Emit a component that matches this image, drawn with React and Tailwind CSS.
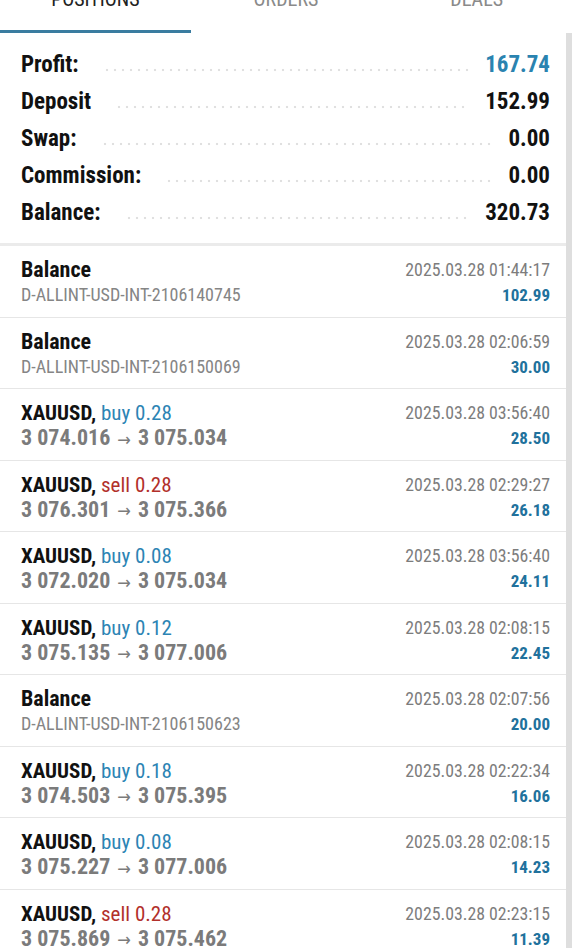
const SUMMARY = [
  { label: 'Profit:', value: '167.74', blue: true },
  { label: 'Deposit', value: '152.99' },
  { label: 'Swap:', value: '0.00' },
  { label: 'Commission:', value: '0.00' },
  { label: 'Balance:', value: '320.73' },
];

const DEALS = [
  { kind: 'balance', sub: 'D-ALLINT-USD-INT-2106140745', date: '2025.03.28 01:44:17', amount: '102.99' },
  { kind: 'balance', sub: 'D-ALLINT-USD-INT-2106150069', date: '2025.03.28 02:06:59', amount: '30.00' },
  { kind: 'trade', side: 'buy', vol: '0.28', from: '3 074.016', to: '3 075.034', date: '2025.03.28 03:56:40', amount: '28.50' },
  { kind: 'trade', side: 'sell', vol: '0.28', from: '3 076.301', to: '3 075.366', date: '2025.03.28 02:29:27', amount: '26.18' },
  { kind: 'trade', side: 'buy', vol: '0.08', from: '3 072.020', to: '3 075.034', date: '2025.03.28 03:56:40', amount: '24.11' },
  { kind: 'trade', side: 'buy', vol: '0.12', from: '3 075.135', to: '3 077.006', date: '2025.03.28 02:08:15', amount: '22.45' },
  { kind: 'balance', sub: 'D-ALLINT-USD-INT-2106150623', date: '2025.03.28 02:07:56', amount: '20.00' },
  { kind: 'trade', side: 'buy', vol: '0.18', from: '3 074.503', to: '3 075.395', date: '2025.03.28 02:22:34', amount: '16.06' },
  { kind: 'trade', side: 'buy', vol: '0.08', from: '3 075.227', to: '3 077.006', date: '2025.03.28 02:08:15', amount: '14.23' },
  { kind: 'trade', side: 'sell', vol: '0.28', from: '3 075.869', to: '3 075.462', date: '2025.03.28 02:23:15', amount: '11.39' },
];

function DealRow({ deal }) {
  return (
    <div className="h-[71.5px] shrink-0 flex justify-between border-b border-[#e6e6e6] pl-[21px] pr-[16px] pt-[12px]">
      <div className="flex flex-col">
        {deal.kind === 'balance' ? (
          <>
            <div className="h-[24px] leading-[24px] text-[22px] font-bold text-[#111]">Balance</div>
            <div className="h-[26px] leading-[26px] text-[18px] text-[#858585]">{deal.sub}</div>
          </>
        ) : (
          <>
            <div className="h-[24px] leading-[24px] text-[21px]">
              <span className="font-bold text-[#111]">XAUUSD,</span>{' '}
              <span className={deal.side === 'buy' ? 'text-[#2c84b4]' : 'text-[#b2302b]'}>
                {deal.side} {deal.vol}
              </span>
            </div>
            <div className="h-[26px] leading-[26px] text-[22px] font-bold text-[#7b7b7b] flex items-center">
              <span>{deal.from}</span>
              <span className="mx-[7px] mt-[3px] text-[18px] font-normal">→</span>
              <span>{deal.to}</span>
            </div>
          </>
        )}
      </div>
      <div className="flex flex-col items-end">
        <div className="h-[24px] leading-[24px] text-[17.8px] text-[#7d7d7d]">{deal.date}</div>
        <div className="h-[26px] leading-[26px] text-[17px] font-bold text-[#21719c]">{deal.amount}</div>
      </div>
    </div>
  );
}

export default function App() {
  return (
    <div className="w-[572px] h-[948px] overflow-hidden bg-white flex flex-col font-['Roboto_Condensed','Liberation_Sans_Narrow','DejaVu_Sans_Condensed',Roboto,sans-serif]">
      {/* tabs, scrolled mostly off the top */}
      <div className="h-[33px] shrink-0 grid grid-cols-3 overflow-hidden">
        {['POSITIONS', 'ORDERS', 'DEALS'].map((t, i) => (
          <div key={t} className="flex flex-col items-center justify-between">
            <div className={`-mt-[11px] text-[20px] leading-[20px] ${i === 0 ? 'text-[#222]' : 'text-[#8a8a8a]'}`}>{t}</div>
            <div className={`h-[3px] w-full ${i === 0 ? 'bg-[#3a7ca0]' : ''}`} />
          </div>
        ))}
      </div>

      <div className="flex-1 flex min-h-0">
        <div className="flex-1 flex flex-col min-w-0">
          {/* account summary */}
          <div className="pt-[14px] pb-[11px] pl-[21px] pr-[16px] flex flex-col border-b-[3px] border-[#ebebeb]">
            {SUMMARY.map(r => (
              <div key={r.label} className="h-[37px] flex items-center text-[23px] font-bold">
                <span className="text-[#111]">{r.label}</span>
                <div className="flex-1 ml-[24px] mr-[16px] mt-[8px] h-[4px] bg-[radial-gradient(circle,#e0e0e0_1px,transparent_1.6px)] bg-size-[8px_4px] bg-repeat-x" />
                <span className={r.blue ? 'text-[#2a83b0]' : 'text-[#111]'}>{r.value}</span>
              </div>
            ))}
          </div>

          {/* deals list */}
          <div className="flex flex-col">
            {DEALS.map((d, i) => (
              <DealRow key={i} deal={d} />
            ))}
          </div>
        </div>
        {/* scrollbar */}
        <div className="w-[6px] shrink-0 bg-[#dedede]" />
      </div>
    </div>
  );
}
